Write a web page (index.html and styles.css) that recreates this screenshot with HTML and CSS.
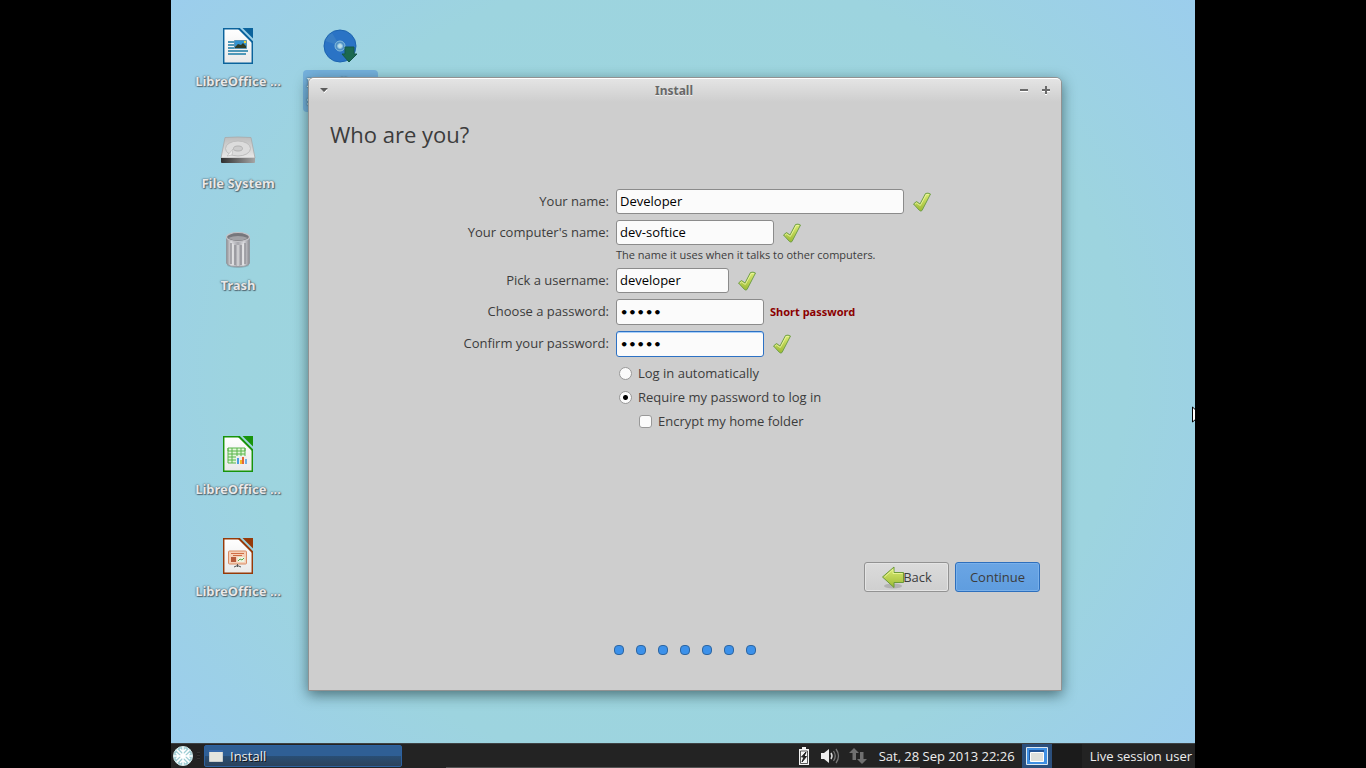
FILE: index.html
```html
<!DOCTYPE html>
<html lang="en">
<head>
<meta charset="utf-8">
<title>Install</title>
<link rel="stylesheet" href="styles.css">
</head>
<body>
<svg class="defs" aria-hidden="true">
  <defs>
    <linearGradient id="green" x1="0" y1="0" x2="0" y2="1"><stop offset="0" stop-color="#dcec74"/><stop offset="1" stop-color="#9cba34"/></linearGradient>
    <linearGradient id="page" x1="0" y1="0" x2="0" y2="1"><stop offset="0" stop-color="#fff"/><stop offset="1" stop-color="#e9e9e9"/></linearGradient>
    <linearGradient id="metal" x1="0" y1="0" x2="1" y2="0"><stop offset="0" stop-color="#8f8f93"/><stop offset=".2" stop-color="#dcdce0"/><stop offset=".5" stop-color="#a6a6ac"/><stop offset=".75" stop-color="#dadade"/><stop offset="1" stop-color="#8a8a90"/></linearGradient>
    <linearGradient id="drive" x1="0" y1="0" x2="0" y2="1"><stop offset="0" stop-color="#bdbdbd"/><stop offset="1" stop-color="#e8e8e8"/></linearGradient>
    <linearGradient id="drivefront" x1="0" y1="0" x2="1" y2="0"><stop offset="0" stop-color="#2f2f2f"/><stop offset="1" stop-color="#a5a5a5"/></linearGradient>
    <symbol id="tick" viewBox="0 0 20 20"><path d="M1.500 12 L4.500 9.500 L8 12 L13.500 1.500 Q16 .5 18.500 2 L10 18.500 Q9 19.600 7.500 18.500 Z" fill="url(#green)" stroke="#71a04a" stroke-linejoin="round"/><path d="M3 12.200 L4.500 11 L8.300 13.500 L14.300 2.500 L16.800 2.500" fill="none" stroke="#edf6a8" stroke-width=".8"/></symbol>
    <symbol id="sheet" viewBox="0 0 30 36"><path d="M.7.7H16.500L29.300 13.500V35.300H.7Z" fill="url(#page)" stroke="currentColor" stroke-width="1.500"/><path d="M15.500.5L29.500 14.500" stroke="currentColor" stroke-width="1.400"/><path d="M19.500 0H30V10.500Z" fill="currentColor"/></symbol>
  </defs>
</svg>
<div class="screen">
  <main class="desktop">
    <nav class="icons" aria-label="Desktop">
      <a class="icon" href="#writer">
        <svg class="icon-art writer" viewBox="0 0 38 38"><use href="#sheet" x="4" y="1" width="30" height="36"/><path d="M9 15h6M9 18h6M9 21h6M9 24h20M9 27h18" stroke="#4f98b8" stroke-width="1.800"/><path d="M15.500 13.500h12v8h-12z" fill="#3193d2" stroke="#5c94b4"/><path d="M16 20l3-3 3 1 2-2 3 3v2H16z" fill="#303b24"/><circle cx="26" cy="15" r="1.200" fill="#f4d93b"/></svg>
        <span class="icon-label">LibreOffice ...</span>
      </a>
      <a class="icon" href="#install">
        <svg class="icon-art" viewBox="0 0 38 38"><circle cx="19" cy="19" r="16" fill="#2a73c5" stroke="#1c64b0"/><path d="M19 19L4.500 14A15 15 0 0 1 11 6Z" fill="#4385c4" opacity=".6"/><circle cx="19" cy="19" r="5" fill="#4c8ec4" stroke="#86bcdc"/><circle cx="19" cy="19" r="2.500" fill="#bce0e8" stroke="#8abddc"/><path d="M24 20h9v7h3l-8 8-7-8h3z" fill="#1b6950" stroke="#155849"/></svg>
        <span class="icon-label selected">Install<br>system</span>
      </a>
      <a class="icon" href="#filesystem">
        <svg class="icon-art" viewBox="0 0 38 38"><path d="M6 8.500Q19 7.500 32 8.500L36 29H2Z" fill="url(#drive)" stroke="#a8a8a8" stroke-width=".8"/><path d="M2 29H36V33Q36 34 35 34H3Q2 34 2 33Z" fill="url(#drivefront)"/><ellipse cx="19" cy="19.500" rx="12.500" ry="7.500" fill="#dcdcdc" stroke="#bdbdbd"/><ellipse cx="19" cy="19.500" rx="4.500" ry="2.500" fill="#ccc" stroke="#b2b2b2"/><path d="M14 20L8 27L13 26Z" fill="#eee" stroke="#b5b5b5" stroke-width=".6"/></svg>
        <span class="icon-label">File System</span>
      </a>
      <a class="icon" href="#trash">
        <svg class="icon-art" viewBox="0 0 38 38"><ellipse cx="19" cy="34" rx="11" ry="3" fill="#617078" opacity=".3"/><path d="M7.500 6V32C8 37 30 37 30.500 32V6Z" fill="url(#metal)" stroke="#909096" stroke-width=".7"/><path d="M12 12V33M16 14V34M22 14V34M26 12V33" stroke="#88888e" stroke-width="1.200"/><path d="M14 13V34M19 14V35M24 13V34" stroke="#eee" stroke-width="1"/><ellipse cx="19" cy="6" rx="11.500" ry="4.500" fill="#77777c" stroke="#c4c4c8" stroke-width="1.200"/><path d="M9 7Q19 3 29 7Q19 12 9 7" fill="#a2a2a6"/></svg>
        <span class="icon-label">Trash</span>
      </a>
      <a class="icon row-five" href="#calc">
        <svg class="icon-art calc" viewBox="0 0 38 38"><use href="#sheet" x="4" y="1" width="30" height="36"/><path d="M9 13h17v15H9z" fill="#e2f6d9"/><path d="M9 13h17v3H9zM9 13v15h17V13M9 19h17M9 22h17M9 25h17M13 13v15M18 13v15M22 13v15" fill="none" stroke="#59b54b"/><path d="M17 21h11v8H17z" fill="#eee"/><path d="M18 23h2v6h-2z" fill="#4c9ce0"/><path d="M21 25h2v4h-2z" fill="#f3bc28"/><path d="M23 22h2v7h-2z" fill="#e46537"/><path d="M26 24h2v5h-2z" fill="#72afe2"/></svg>
        <span class="icon-label">LibreOffice ...</span>
      </a>
      <a class="icon row-six" href="#impress">
        <svg class="icon-art impress" viewBox="0 0 38 38"><use href="#sheet" x="4" y="1" width="30" height="36"/><rect x="9.500" y="14" width="18" height="13" rx="1" fill="#f6d0b8" stroke="#d98c65"/><path d="M12 16.500h13M14 18.500h9" stroke="#cf6c43"/><path d="M12 20h5v5h-5z" fill="#b65a3b"/><path d="M18.500 20h7v5h-7z" fill="#edf4e4"/><path d="M19 24l2-2 2 1 2-2" fill="none" stroke="#5ba546"/><path d="M18.500 27v3M15 30l3.500-1.500L22 30" fill="none" stroke="#555"/></svg>
        <span class="icon-label">LibreOffice ...</span>
      </a>
    </nav>

    <section class="window" aria-label="Install">
      <header class="titlebar">
        <button class="title-button" aria-label="Window menu"><svg viewBox="0 0 10 10"><path d="M1 2h8L5 6z" fill="#5c5c5c"/><path d="M5 7l3-3" stroke="#fff"/></svg></button>
        <h2 class="title">Install</h2>
        <div class="title-actions">
          <button class="title-button" aria-label="Minimize"><svg viewBox="0 0 10 10"><path d="M1 5.500h8" stroke="#fff"/><path d="M1 4h8" stroke="#6a6a6a" stroke-width="2"/></svg></button>
          <button class="title-button" aria-label="Maximize"><svg viewBox="0 0 10 10"><path d="M1 5.500h8M4 8.500h2" stroke="#fff"/><path d="M1 4h8M5 0v8" stroke="#6a6a6a" stroke-width="2"/></svg></button>
        </div>
      </header>
      <form class="content">
        <h1 class="heading">Who are you?</h1>
        <div class="fields">
          <label for="name">Your name:</label>
          <div class="field"><input class="text wide" id="name" value="Developer"><svg class="tick"><use href="#tick"/></svg></div>
          <label for="computer">Your computer's name:</label>
          <div class="field"><input class="text medium" id="computer" value="dev-softice"><svg class="tick"><use href="#tick"/></svg></div>
          <p class="hint">The name it uses when it talks to other computers.</p>
          <label for="username">Pick a username:</label>
          <div class="field"><input class="text short" id="username" value="developer"><svg class="tick"><use href="#tick"/></svg></div>
          <label for="password">Choose a password:</label>
          <div class="field"><input class="text secret" type="password" id="password" value="12345"><strong class="warning">Short password</strong></div>
          <label for="confirm">Confirm your password:</label>
          <div class="field"><input class="text secret active" type="password" id="confirm" value="12345"><svg class="tick"><use href="#tick"/></svg></div>
          <div class="options">
            <label class="option"><input class="mark" type="radio" name="login">Log in automatically</label>
            <label class="option"><input class="mark" type="radio" name="login" checked>Require my password to log in</label>
            <label class="option nested"><input class="mark box" type="checkbox">Encrypt my home folder</label>
          </div>
        </div>
        <div class="actions">
          <button class="button" type="button"><svg class="arrow" viewBox="0 0 24 24"><ellipse cx="12" cy="21" rx="9" ry="2.500" fill="#777" opacity=".35"/><path d="M1.500 12L13 2V7.500H22.500V17.500H13V22.500Z" fill="url(#green)" stroke="#6c9a3a"/><path d="M3.500 12L12 4.500V8.500H21.500" fill="none" stroke="#edf7a0" stroke-width=".8"/></svg>Back</button>
          <button class="button primary" type="button">Continue</button>
        </div>
        <div class="steps" aria-label="Progress"><i></i><i></i><i></i><i></i><i></i><i></i><i></i></div>
      </form>
    </section>
    <svg class="pointer" viewBox="0 0 12 18"><path d="M.5 1V16L4 13L7 17L9 16L7 11H11Z" fill="#fff" stroke="#000"/></svg>
  </main>

  <footer class="panel">
    <button class="menu" aria-label="Applications"><svg viewBox="0 0 20 20"><circle cx="10" cy="10" r="9.500" fill="#9fcdd4" stroke="#d9f0f2"/><path d="M10 1V19M1 10H19M3.600 3.600L16.400 16.400M16.400 3.600L3.600 16.400M7 3l3 3 3-3M7 17l3-3 3 3M3 7l3 3-3 3M17 7l-3 3 3 3" fill="none" stroke="#fff" stroke-width="1.500"/><circle cx="10" cy="10" r="2.500" fill="#fff"/></svg></button>
    <span class="grip"></span>
    <button class="task"><svg viewBox="0 0 14 12"><path d="M.5.5h13v11H.5z" fill="#e4e5df" stroke="#c9ccca"/><path d="M0 0h14v2H0z" fill="#3769ab"/></svg>Install</button>
    <div class="tray">
      <svg class="tray-icon battery" viewBox="0 0 12 20"><path d="M4 1h4v2h3v16H1V3h3z" fill="#f2f2f2"/><path d="M2.500 5h7v12.500h-7z" fill="#f4f4f4" stroke="#333" stroke-width=".8"/><path d="M8 6L3.500 11H6L4 16L8.500 10.500H6Z" fill="#222" stroke="#222"/></svg>
      <svg class="tray-icon sound" viewBox="0 0 20 18"><path d="M1 6h3l5-4v14l-5-4H1z" fill="#eee"/><path d="M11 6q2 3 0 6" fill="none" stroke="#ddd" stroke-width="1.500"/><path d="M13.500 4q3.500 5 0 10M16 2q5 7 0 14" fill="none" stroke="#777" stroke-width="1.300"/></svg>
      <svg class="tray-icon network" viewBox="0 0 18 18"><path d="M5 1L10 6H7V13H3.500V6H0ZM13 17L8 12H11V5H14.500V12H18Z" fill="#707070"/></svg>
      <time class="clock">Sat, 28 Sep 2013 22:26</time>
      <button class="workspace current" aria-label="Workspace 1"><svg viewBox="0 0 22 18"><path d="M.5.5h21v17H.5z" fill="#3f8fe3" stroke="#dde8f0"/><path d="M3 3h15v10h-2V5H5v8H3z" fill="#245596"/><path d="M4.500 5.500h13v9h-13z" fill="#dfe0db" stroke="#fff"/></svg></button>
      <button class="workspace" aria-label="Workspace 2"></button>
      <span class="user">Live session user</span>
    </div>
    <span class="scrollmark"></span>
  </footer>
</div>
</body>
</html>
```

FILE: styles.css
```css
* { box-sizing: border-box; }
body { margin: 0; background: #000; color: #3c3c3c; font: 13px/18px "Open Sans", "Noto Sans", sans-serif; }
button, input { font: inherit; color: inherit; margin: 0; }
button { padding: 0; border: 0; background: none; }
h1, h2, p { margin: 0; }
.defs { position: absolute; width: 0; height: 0; }
.screen { display: flex; flex-direction: column; height: 100vh; min-height: 700px; max-width: 1024px; margin: 0 auto; }
.desktop { position: relative; flex: 1; overflow: hidden; background: radial-gradient(ellipse 72% 90% at 50% 50%, #9ed7dc 0%, #9dd4df 60%, #9bcbf2 100%); }

.icons { display: grid; grid-template: repeat(6, 102px) / 102px 102px; padding: 16px; }
.icon { grid-column: 1; display: flex; flex-direction: column; align-items: center; gap: 7px; padding-top: 11px; text-decoration: none; }
.icon[href="#install"] { grid-column: 2; }
.icon[href="#writer"], .icon[href="#install"] { grid-row: 1; }
.row-five { grid-row: 5; }
.row-six { grid-row: 6; }
.icon-art { width: 38px; height: 38px; }
.writer { color: #0b639c; }
.calc { color: #18940b; }
.impress { color: #963a09; }
.icon-label { color: #e8e8e8; font-family: "Noto Sans", sans-serif; font-weight: 700; white-space: nowrap; text-shadow: 0 0 1px #4f6570, 0 0 2px #4f6570, 1px 1px 1px #566b75; }
.selected { padding: 3px 4px; margin-top: -2px; width: 75px; border-radius: 4px; background: #75b1dd; }

.window { position: absolute; top: 77px; right: 133px; bottom: 52px; left: 137px; display: flex; flex-direction: column; border: 1px solid #929292; border-radius: 6px 6px 0 0; background: #cecece; box-shadow: 0 4px 14px rgba(30, 60, 65, .65); }
.titlebar { display: grid; grid-template-columns: 1fr auto 1fr; align-items: center; height: 24px; padding: 0 10px; border-top: 1px solid #fff; border-radius: 5px 5px 0 0; background: linear-gradient(#e4e4e4, #cecece); }
.title { color: #686868; font: 700 12px/18px "Noto Sans", sans-serif; text-shadow: 0 1px #eee; padding-right: 22px; }
.title-actions { display: flex; justify-content: flex-end; gap: 12px; }
.title-button { display: flex; width: 10px; height: 10px; }
.title-button svg { width: 10px; height: 10px; }
.content { flex: 1; display: flex; flex-direction: column; padding: 16px 21px 35px; }
.heading { font-size: 22px; line-height: 32px; font-weight: 400; }
.fields { display: grid; grid-template-columns: 279px 1fr; gap: 6px 7px; align-items: center; margin-top: 39px; }
.fields > label { text-align: right; padding-bottom: 2px; }
.field { display: flex; align-items: center; gap: 8px; }
.text { height: 25px; padding: 0 3px 2px; border: 1px solid #8b8b8b; border-radius: 3px; background: #fbfbfb; color: #000; outline: 0; }
.wide { width: 288px; }
.medium { width: 158px; }
.short { width: 113px; }
.secret { width: 148px; height: 26px; padding-bottom: 0; font: 700 13px/18px "DejaVu Sans", sans-serif; }
.active { border-color: #2d71c4; box-shadow: inset 0 1px #a9d0fa; }
.tick { width: 20px; height: 20px; }
.hint { grid-column: 2; font-size: 11px; line-height: 16px; margin: -4px 0 -1px; }
.warning { color: #8b0000; font-family: "Noto Sans", sans-serif; font-size: 11px; margin-left: -2px; }
.options { grid-column: 2; margin-top: -2px; }
.option { display: flex; align-items: center; gap: 6px; height: 24px; padding-left: 3px; }
.nested { padding-left: 23px; }
.mark { appearance: none; width: 13px; height: 13px; border: 1px solid #999; border-radius: 50%; background: #fbfbfb; }
.mark:checked { background: radial-gradient(circle, #000 0 2px, #fbfbfb 3px); }
.box { border-radius: 3px; }
.actions { display: flex; justify-content: flex-end; gap: 6px; margin-top: auto; }
.button { display: flex; align-items: center; justify-content: center; width: 85px; height: 30px; padding-bottom: 1px; border: 1px solid #929292; border-radius: 3px; background: linear-gradient(#dbdbdb, #cfcfcf); box-shadow: inset 0 0 0 1px #e4e4e4; }
.primary { border-color: #2d6fbd; background: linear-gradient(#6aa5e4, #5f9ddf); box-shadow: inset 0 0 0 1px #79b0ea; }
.arrow { width: 24px; height: 24px; margin-right: -2px; }
.steps { display: flex; justify-content: center; gap: 12px; margin-top: 53px; }
.steps i { width: 10px; height: 10px; border: 1px solid #2f66a0; border-radius: 4px; background: #3c91ea; }
.pointer { position: absolute; top: 406px; right: -9px; width: 12px; height: 18px; }

.panel { position: relative; display: flex; align-items: center; height: 25px; border-top: 1px solid #3e4244; background: #232323; color: #eee; }
.menu { display: flex; width: 20px; height: 20px; margin-left: 2px; }
.menu svg { width: 20px; height: 20px; }
.grip { width: 3px; height: 8px; margin: 0 4px; background: repeating-linear-gradient(#333 0 1px, #1e1e1e 1px 3px); }
.task { display: flex; align-items: center; gap: 7px; width: 198px; height: 22px; padding: 0 4px; border: 1px solid #2d62a0; border-radius: 2px; background: linear-gradient(#2f5f95 0 50%, #294e75 50%, #2c435c); text-shadow: 1px 1px #111; }
.task svg { width: 14px; height: 12px; }
.tray { display: flex; align-items: center; margin-left: auto; padding-right: 3px; }
.battery { width: 12px; height: 20px; }
.sound { width: 20px; height: 18px; margin-left: 10px; }
.network { width: 18px; height: 18px; margin-left: 9px; }
.clock { margin: 0 7px 0 12px; }
.workspace { display: flex; align-items: center; justify-content: center; width: 30px; height: 24px; background: #1b1b1b; }
.current { background: #2b4f7c; }
.workspace svg { width: 22px; height: 18px; }
.user { margin-left: 8px; }
.scrollmark { position: absolute; bottom: 0; left: 275px; width: 474px; height: 1px; background: #555; }
```
